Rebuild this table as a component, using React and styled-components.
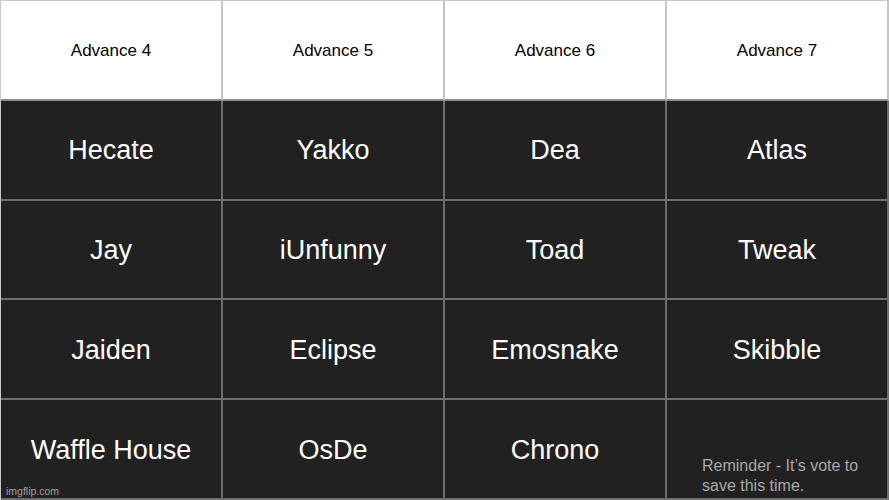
import React from 'react'
import styled, { createGlobalStyle } from 'styled-components'

const Global = createGlobalStyle`
  body {
    margin: 0;
    background: #fff;
    font-family: "Liberation Sans", Arial, sans-serif;
  }
`

const Board = styled.div`
  position: relative;
  width: 889px;
  height: 500px;
  box-sizing: border-box;
  display: grid;
  grid-template-columns: repeat(4, 1fr);
  grid-template-rows: repeat(5, 1fr);
  background: #212121;
  border-top: 1px solid #c8c8c8;
  border-left: 1px solid #c8c8c8;
`

const Cell = styled.div`
  position: relative;
  display: flex;
  align-items: center;
  justify-content: center;
  box-sizing: border-box;
  background: ${({ head }) => (head ? '#fff' : '#212121')};
  color: ${({ head }) => (head ? '#000' : '#fff')};
  font-size: ${({ head }) => (head ? '17px' : '27px')};
  border-right: 2px solid ${({ head }) => (head ? '#c4c4c4' : '#6e6e6e')};
  border-bottom: 2px solid ${({ head }) => (head ? '#8a8a8a' : '#6e6e6e')};
  padding-top: 2px;
`

const Note = styled.div`
  position: absolute;
  left: 35px;
  top: 56px;
  color: #a8a8a8;
  font-size: 16px;
  line-height: 20px;
`

const Mark = styled.div`
  position: absolute;
  left: 5px;
  bottom: 3px;
  color: #a0a0a0;
  font-size: 10.5px;
`

const heads = ['Advance 4', 'Advance 5', 'Advance 6', 'Advance 7']
const rows = [
  ['Hecate', 'Yakko', 'Dea', 'Atlas'],
  ['Jay', 'iUnfunny', 'Toad', 'Tweak'],
  ['Jaiden', 'Eclipse', 'Emosnake', 'Skibble'],
  ['Waffle House', 'OsDe', 'Chrono', '']
]

export default function App () {
  return <>
    <Global />
    <Board>
      {heads.map((h) => <Cell head key={h}>{h}</Cell>)}
      {rows.map((row, i) => row.map((name, j) =>
        <Cell key={i + '-' + j}>
          {name}
          {i === 3 && j === 3 && <Note>Reminder - It’s vote to<br />save this time.</Note>}
        </Cell>
      ))}
      <Mark>imgflip.com</Mark>
    </Board>
  </>
}
